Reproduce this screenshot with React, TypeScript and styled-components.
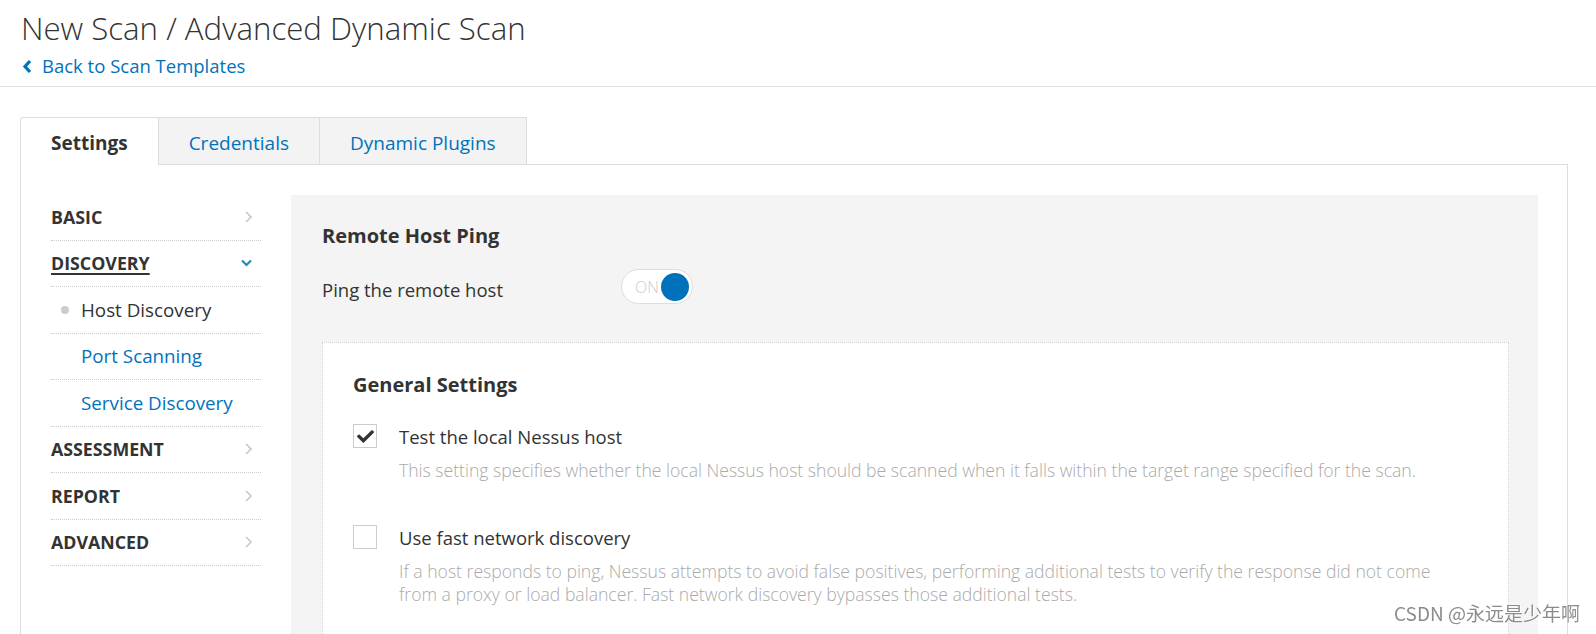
import React from 'react';
import styled, { createGlobalStyle } from 'styled-components';

const BLUE = '#0072bc';

const GlobalStyle = createGlobalStyle`
  html, body {
    margin: 0;
    padding: 0;
    overflow: hidden;
    background: #fff;
  }
  body {
    font-family: "Open Sans", "Noto Sans", sans-serif;
    color: #333;
  }
`;

const Header = styled.header`
  padding: 9px 20px 8px 21px;
  border-bottom: 1px solid #e2e2e2;
`;

const Title = styled.h1`
  margin: 0;
  font-size: 31.2px;
  line-height: 38px;
  font-weight: 300;
  color: #333;
`;

const BackLink = styled.a`
  display: flex;
  align-items: center;
  gap: 10px;
  margin-top: 7px;
  padding-left: 1px;
  font-size: 18.5px;
  line-height: 24px;
  color: ${BLUE};
  text-decoration: none;
  cursor: pointer;
`;

const Main = styled.main`
  padding: 30px 28px 0 20px;
`;

const Tabs = styled.div`
  display: flex;
`;

const Tab = styled.div<{ active?: boolean }>`
  display: flex;
  align-items: center;
  box-sizing: border-box;
  height: ${({ active }) => (active ? '48px' : '47px')};
  margin-bottom: ${({ active }) => (active ? '-1px' : '0')};
  padding: 3px 30px 0;
  border: 1px solid #ddd;
  border-bottom: none;
  border-radius: ${({ active }) => (active ? '3px 0 0 0' : '0')};
  background: ${({ active }) => (active ? '#fff' : '#f3f3f3')};
  color: ${({ active }) => (active ? '#333' : BLUE)};
  font-size: 19px;
  line-height: 24px;
  font-weight: ${({ active }) => (active ? 700 : 400)};
  position: relative;
  z-index: ${({ active }) => (active ? 1 : 0)};
  & + & {
    margin-left: -1px;
  }
`;

const Panel = styled.section`
  display: flex;
  gap: 30px;
  height: 520px;
  padding: 30px 29px 0 30px;
  border: 1px solid #ddd;
  background: #fff;
`;

const Nav = styled.nav`
  flex: none;
  width: 210px;
  margin-top: -1px;
`;

const NavItem = styled.div<{ open?: boolean }>`
  display: flex;
  align-items: center;
  justify-content: space-between;
  height: 45.5px;
  padding-right: 9px;
  border-bottom: 1px dotted #ccc;
  font-size: 17.8px;
  line-height: 22px;
  font-weight: 700;
  color: #333;
  text-transform: uppercase;
  text-decoration: ${({ open }) => (open ? 'underline' : 'none')};
  text-underline-offset: 3px;
  text-decoration-thickness: 2px;
`;

const SubItem = styled.div<{ active?: boolean }>`
  display: flex;
  align-items: center;
  height: 45.5px;
  padding-left: 10px;
  border-bottom: 1px dotted #ccc;
  font-size: 18.8px;
  line-height: 24px;
  color: ${({ active }) => (active ? '#333' : BLUE)};

  &::before {
    content: '';
    width: 8px;
    height: 8px;
    margin-right: 12px;
    border-radius: 50%;
    background: ${({ active }) => (active ? '#ccc' : 'transparent')};
  }
`;

const Content = styled.div`
  flex: 1;
  background: #f4f4f4;
  padding: 27px 29px 0 31px;
`;

const SectionTitle = styled.h2`
  margin: 0;
  font-size: 20px;
  line-height: 28px;
  font-weight: 700;
  color: #333;
`;

const ToggleRow = styled.div`
  display: flex;
  align-items: center;
  margin-top: 19px;
`;

const ToggleLabel = styled.span`
  width: 299px;
  padding-top: 6px;
  font-size: 18.5px;
  line-height: 24px;
`;

const Toggle = styled.div`
  position: relative;
  box-sizing: border-box;
  width: 72px;
  height: 35px;
  border: 1px solid #ddd;
  border-radius: 18px;
  background: #fff;
  display: flex;
  align-items: center;
  padding-left: 13px;
  font-size: 16px;
  font-weight: 300;
  color: #ccc;
`;

const Knob = styled.span`
  position: absolute;
  right: 3px;
  top: 3px;
  width: 28px;
  height: 28px;
  border-radius: 50%;
  background: ${BLUE};
`;

const Box = styled.div`
  margin-top: 38px;
  padding: 28px 30px 30px 30px;
  border: 1px dotted #d3d3d3;
  background: #fff;
  min-height: 400px;
`;

const Option = styled.div`
  display: grid;
  grid-template-columns: 24px 1fr;
  column-gap: 22px;
  margin-top: 26px;
  & + & {
    margin-top: 44px;
  }
`;

const CheckBox = styled.span`
  box-sizing: border-box;
  width: 24px;
  height: 24px;
  border: 1px solid #ccc;
  background: #fff;
  display: flex;
  align-items: center;
  justify-content: center;
  margin-top: -1px;
`;

const OptionLabel = styled.div`
  font-size: 18.5px;
  line-height: 24px;
  color: #333;
`;

const OptionHelp = styled.p`
  grid-column: 2;
  margin: 10px 0 0;
  padding-right: 16px;
  font-size: 17.6px;
  line-height: 23px;
  font-weight: 300;
  color: #aaa;
`;

const Watermark = styled.div`
  position: fixed;
  right: 16px;
  bottom: 9px;
  font-family: "Noto Sans CJK SC", "Noto Sans", sans-serif;
  font-size: 19px;
  line-height: 24px;
  color: #8c8c8c;
  text-shadow: 0 0 2px #fff, 0 0 2px #fff;
`;

const ChevronLeft = () => (
  <svg width="10" height="15" viewBox="0 0 10 15">
    <polyline points="8,2 3,7.5 8,13" fill="none" stroke={BLUE} strokeWidth="3.2" />
  </svg>
);

const ChevronRight = () => (
  <svg width="7" height="12" viewBox="0 0 7 12">
    <polyline points="1,1 6,6 1,11" fill="none" stroke="#c8c8c8" strokeWidth="1.6" />
  </svg>
);

const ChevronDown = () => (
  <svg width="11" height="8" viewBox="0 0 11 8">
    <polyline points="1,1.5 5.5,6 10,1.5" fill="none" stroke="#238bb4" strokeWidth="2.2" />
  </svg>
);

const Check = () => (
  <svg width="17" height="14" viewBox="0 0 512 420">
    <path
      fill="#333"
      d="M173.9 407.4l-166.4-166.4c-10-10-10-26.2 0-36.2l36.2-36.2c10-10 26.2-10 36.2 0L192 280.7 432.1 40.6c10-10 26.2-10 36.2 0l36.2 36.2c10 10 10 26.2 0 36.2l-294.4 294.4c-10 10-26.2 10-36.2 0z"
    />
  </svg>
);

const sections = ['Basic', 'Discovery', 'Assessment', 'Report', 'Advanced'];
const discoveryItems = ['Host Discovery', 'Port Scanning', 'Service Discovery'];

export default function App() {
  return (
    <>
      <GlobalStyle />
      <Header>
        <Title>New Scan / Advanced Dynamic Scan</Title>
        <BackLink>
          <ChevronLeft />
          Back to Scan Templates
        </BackLink>
      </Header>
      <Main>
        <Tabs>
          <Tab active>Settings</Tab>
          <Tab>Credentials</Tab>
          <Tab>Dynamic Plugins</Tab>
        </Tabs>
        <Panel>
          <Nav>
            {sections.map((s) => (
              <React.Fragment key={s}>
                <NavItem open={s === 'Discovery'}>
                  {s}
                  {s === 'Discovery' ? <ChevronDown /> : <ChevronRight />}
                </NavItem>
                {s === 'Discovery' &&
                  discoveryItems.map((d, i) => (
                    <SubItem key={d} active={i === 0}>
                      {d}
                    </SubItem>
                  ))}
              </React.Fragment>
            ))}
          </Nav>
          <Content>
            <SectionTitle>Remote Host Ping</SectionTitle>
            <ToggleRow>
              <ToggleLabel>Ping the remote host</ToggleLabel>
              <Toggle>
                ON
                <Knob />
              </Toggle>
            </ToggleRow>
            <Box>
              <SectionTitle>General Settings</SectionTitle>
              <Option>
                <CheckBox>
                  <Check />
                </CheckBox>
                <OptionLabel>Test the local Nessus host</OptionLabel>
                <OptionHelp>
                  This setting specifies whether the local Nessus host should be scanned when it falls
                  within the target range specified for the scan.
                </OptionHelp>
              </Option>
              <Option>
                <CheckBox />
                <OptionLabel>Use fast network discovery</OptionLabel>
                <OptionHelp>
                  If a host responds to ping, Nessus attempts to avoid false positives, performing
                  additional tests to verify the response did not come from a proxy or load balancer.
                  Fast network discovery bypasses those additional tests.
                </OptionHelp>
              </Option>
            </Box>
          </Content>
        </Panel>
      </Main>
      <Watermark>CSDN @永远是少年啊</Watermark>
    </>
  );
}
